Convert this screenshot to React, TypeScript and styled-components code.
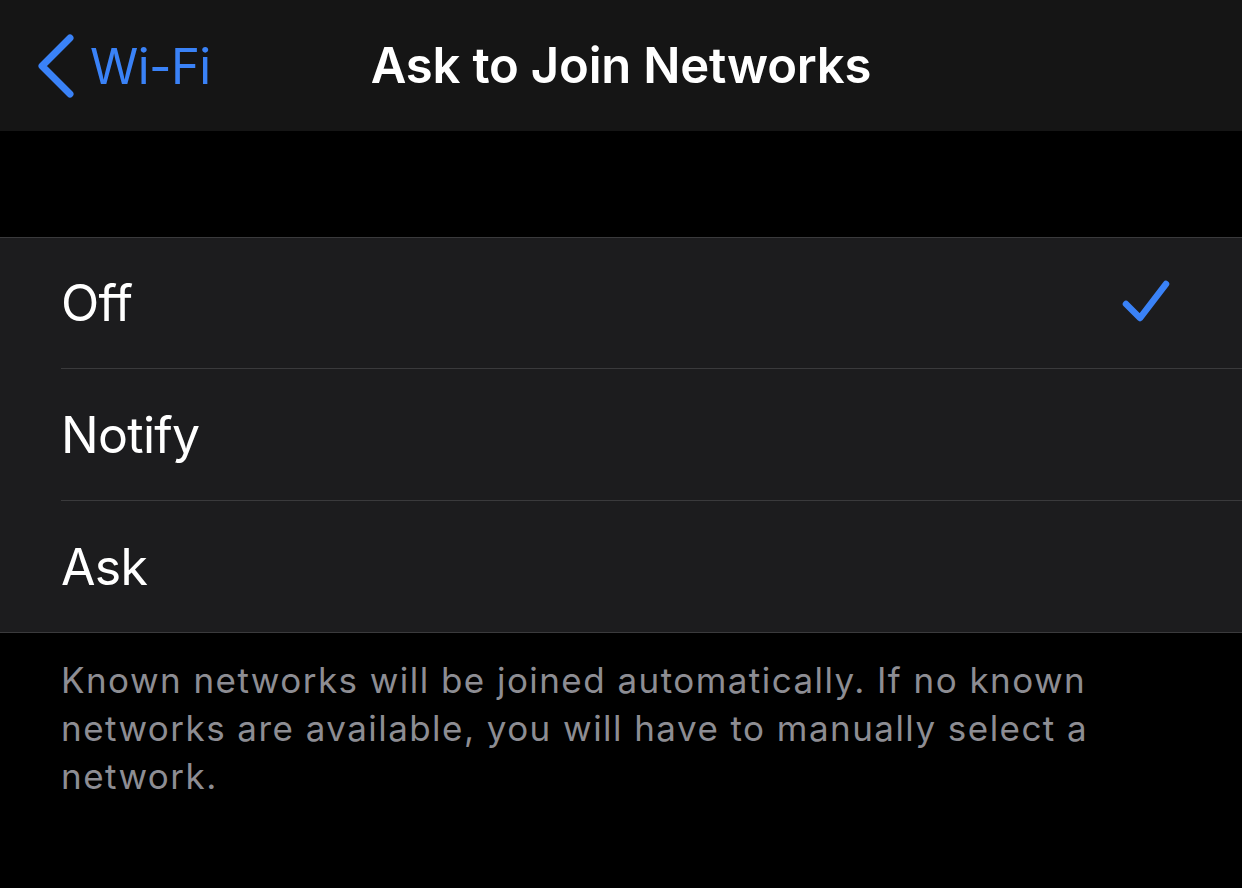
import React from "react";
import styled, { createGlobalStyle } from "styled-components";

const GlobalStyle = createGlobalStyle`
  html, body {
    margin: 0;
    padding: 0;
    background: #000000;
  }
  body {
    font-family: Inter, "Noto Sans", "Liberation Sans", sans-serif;
    -webkit-font-smoothing: antialiased;
  }
`;

const options = ["Off", "Notify", "Ask"];

function App() {
  const selected = "Off";

  return (
    <>
      <GlobalStyle />
      <Page>
        <NavBar>
          <BackButton>
            <svg width="40" height="64" viewBox="0 0 40 64" fill="none">
              <path
                d="M34 4 L6 32 L34 60"
                stroke="#3a82f7"
                strokeWidth="7"
                strokeLinecap="round"
                strokeLinejoin="round"
              />
            </svg>
            <BackLabel>Wi-Fi</BackLabel>
          </BackButton>
          <Title>Ask to Join Networks</Title>
        </NavBar>
        <Spacer />
        <List>
          {options.map((option, i) => (
            <Row key={option}>
              <RowInner first={i === 0} last={i === options.length - 1}>
                <RowLabel>{option}</RowLabel>
                {option === selected && (
                  <svg width="52" height="48" viewBox="0 0 52 48" fill="none">
                    <path
                      d="M6 25 L20 39 L46 5"
                      stroke="#3a82f7"
                      strokeWidth="6.5"
                      strokeLinecap="round"
                      strokeLinejoin="round"
                    />
                  </svg>
                )}
              </RowInner>
            </Row>
          ))}
        </List>
        <Footer>
          Known networks will be joined automatically. If no known networks are
          available, you will have to manually select a network.
        </Footer>
      </Page>
    </>
  );
}

const Page = styled.div`
  width: 1242px;
  height: 888px;
  background: #000000;
  display: flex;
  flex-direction: column;
  overflow: hidden;
`;

const NavBar = styled.div`
  height: 131px;
  background: #151515;
  display: flex;
  align-items: center;
  justify-content: center;
  position: relative;
`;

const BackButton = styled.div`
  position: absolute;
  left: 36px;
  top: 34px;
  display: flex;
  align-items: center;
  gap: 14px;
`;

const BackLabel = styled.span`
  color: #3a82f7;
  font-size: 49px;
  font-weight: 400;
  letter-spacing: -0.6px;
`;

const Title = styled.h1`
  margin: 0;
  color: #ffffff;
  font-size: 49px;
  font-weight: 600;
  letter-spacing: -0.2px;
`;

const Spacer = styled.div`
  height: 106px;
`;

const List = styled.div`
  background: #1c1c1e;
  border-top: 1px solid #3a3a3c;
  border-bottom: 1px solid #3a3a3c;
`;

const Row = styled.div`
  padding-left: 61px;
`;

const RowInner = styled.div<{ first: boolean; last: boolean }>`
  height: ${({ first }) => (first ? "130px" : "131px")};
  display: flex;
  align-items: center;
  justify-content: space-between;
  padding-right: 70px;
  border-bottom: ${({ last }) => (last ? "none" : "1px solid #3a3a3c")};
`;

const RowLabel = styled.span`
  color: #ffffff;
  font-size: 50px;
  font-weight: 400;
  letter-spacing: -0.7px;
`;

const Footer = styled.p`
  margin: 0;
  padding: 23px 100px 0 61px;
  color: #8d8d93;
  font-size: 35px;
  line-height: 48px;
  font-weight: 400;
  letter-spacing: 1.45px;
`;

export default App;
